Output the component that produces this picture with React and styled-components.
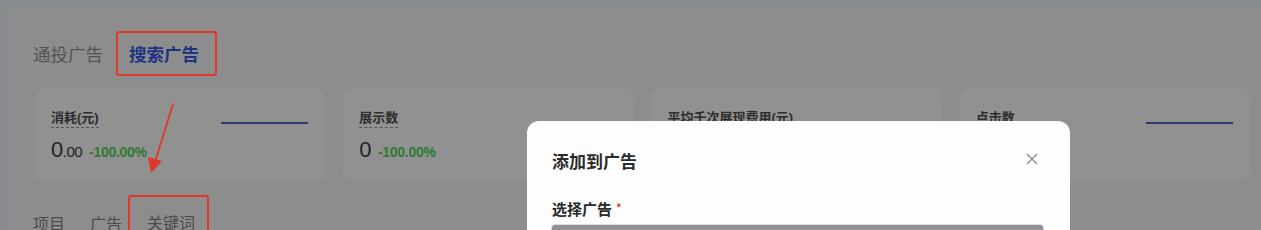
import React from "react";
import styled, { createGlobalStyle } from "styled-components";

const Global = createGlobalStyle`
  html, body { margin: 0; padding: 0; }
  body {
    background: #888b90;
    width: 1261px;
    height: 230px;
    overflow: hidden;
    font-family: "Liberation Sans", "Noto Sans CJK SC", sans-serif;
  }
`;

const Screen = styled.div`
  position: relative;
  width: 1261px;
  height: 230px;
  overflow: hidden;
  padding-top: 10px;
  box-sizing: border-box;
`;

const Panel = styled.div`
  margin-left: 8px;
  height: 220px;
  background: #8d8d8d;
  padding: 21px 11px 0 25px;
  box-sizing: border-box;
  display: flex;
  flex-direction: column;
`;

const TabRow = styled.div`
  display: flex;
  align-items: center;
  height: ${(p) => p.$h}px;
  gap: ${(p) => p.$gap}px;
`;

const Tab = styled.span`
  font-family: "Noto Sans CJK SC", sans-serif;
  font-size: ${(p) => p.$size}px;
  line-height: 1;
  color: ${(p) => (p.$active ? "#1f3384" : "#525252")};
  font-weight: ${(p) => (p.$active ? 700 : 400)};
  white-space: nowrap;
`;

const Highlight = styled.div`
  box-sizing: border-box;
  height: ${(p) => p.$h}px;
  border: 2.5px solid #e2362b;
  border-radius: 3px;
  display: flex;
  align-items: center;
  padding: 0 ${(p) => p.$pr}px 0 ${(p) => p.$pl}px;
  align-self: flex-start;
`;

const Cards = styled.div`
  display: grid;
  grid-template-columns: repeat(4, 1fr);
  gap: 18px;
  margin: 12px 0 0 2px;
`;

const Card = styled.div`
  height: 92px;
  background: #919191;
  border-radius: 9px;
  display: flex;
  justify-content: space-between;
  padding: 21px 17px 0 16px;
  box-sizing: border-box;
`;

const Info = styled.div`
  display: flex;
  flex-direction: column;
`;

const Label = styled.span`
  font-family: "Liberation Sans", "Noto Sans CJK SC", sans-serif;
  font-size: 13px;
  font-weight: 700;
  color: #2c2c2c;
  line-height: 18px;
  align-self: flex-start;
  border-bottom: 1px dashed #555;
  white-space: nowrap;
`;

const ValueRow = styled.div`
  display: flex;
  align-items: baseline;
  margin-top: 10px;
  gap: 7px;
`;

const Value = styled.span`
  font-size: 22px;
  color: #222;
  line-height: 24px;
  letter-spacing: -0.5px;
`;

const Decimal = styled.span`
  font-size: 15px;
`;

const Delta = styled.span`
  font-size: 14px;
  font-weight: 700;
  color: #2d7a30;
  letter-spacing: -0.3px;
`;

const Spark = styled.svg`
  display: block;
  margin-top: 12px;
  flex-shrink: 0;
`;

const SecondTabs = styled(TabRow)`
  margin-top: 15px;
  align-items: flex-start;
`;

const SubTab = styled.span`
  font-family: "Noto Sans CJK SC", sans-serif;
  font-size: 16px;
  color: #4b4b4b;
  line-height: 1;
  margin-top: ${(p) => p.$mt}px;
  white-space: nowrap;
`;

const Arrow = styled.svg`
  position: absolute;
  left: 140px;
  top: 100px;
`;

const Modal = styled.div`
  position: absolute;
  left: 527px;
  top: 121px;
  width: 543px;
  height: 140px;
  background: #fdfdfd;
  border-radius: 12px;
  padding: 29px 32px 0 25px;
  box-sizing: border-box;
`;

const ModalHead = styled.div`
  display: flex;
  align-items: center;
  justify-content: space-between;
`;

const ModalTitle = styled.span`
  font-family: "Noto Sans CJK SC", sans-serif;
  font-size: 17px;
  font-weight: 700;
  color: #2a2a2a;
  line-height: 22px;
`;

const Close = styled.svg`
  display: block;
  margin-top: -4px;
`;

const FieldLabel = styled.div`
  margin-top: 27px;
  font-family: "Noto Sans CJK SC", sans-serif;
  font-size: 15px;
  font-weight: 700;
  color: #2a2a2a;
  line-height: 20px;
  display: flex;
  align-items: flex-start;
`;

const Required = styled.span`
  color: #d04848;
  font-size: 11px;
  margin-left: 4px;
  line-height: 16px;
`;

const Input = styled.div`
  margin-top: 5px;
  width: 493px;
  height: 34px;
  margin-left: -1px;
  border: 1.5px solid #d6dcea;
  border-radius: 4px;
  background: #8e9095;
  box-sizing: border-box;
`;

const cards = [
  { label: "消耗(元)", int: "0", dec: ".00", delta: "-100.00%", chart: true },
  { label: "展示数", int: "0", dec: "", delta: "-100.00%", chart: false },
  { label: "平均千次展现费用(元)", int: "", dec: "", delta: "", chart: false },
  { label: "点击数", int: "", dec: "", delta: "", chart: true },
];

export default function App() {
  return (
    <Screen>
      <Global />
      <Panel>
        <TabRow $h={45} $gap={13}>
          <Tab $size={17.5}>通投广告</Tab>
          <Highlight $h={45} $pl={11} $pr={16}>
            <Tab $size={17.5} $active>搜索广告</Tab>
          </Highlight>
        </TabRow>
        <Cards>
          {cards.map((c) => (
            <Card key={c.label}>
              <Info>
                <Label>{c.label}</Label>
                {c.int && (
                  <ValueRow>
                    <Value>
                      {c.int}
                      {c.dec && <Decimal>{c.dec}</Decimal>}
                    </Value>
                    <Delta>{c.delta}</Delta>
                  </ValueRow>
                )}
              </Info>
              {c.chart && (
                <Spark width="87" height="4" viewBox="0 0 87 4">
                  <line x1="0" y1="2" x2="87" y2="2" stroke="#2c3a6c" strokeWidth="2.2" />
                </Spark>
              )}
            </Card>
          ))}
        </Cards>
        <SecondTabs $h={40} $gap={0}>
          <SubTab $mt={20}>项目</SubTab>
          <SubTab $mt={20} style={{ marginLeft: 25 }}>广告</SubTab>
          <Highlight $h={45} $pl={17} $pr={12} style={{ marginLeft: 6, alignItems: "flex-start", paddingTop: 17 }}>
            <SubTab $mt={0}>关键词</SubTab>
          </Highlight>
        </SecondTabs>
      </Panel>
      <Arrow width="40" height="80" viewBox="0 0 40 80">
        <line x1="33" y1="4" x2="15" y2="62" stroke="#e2362b" strokeWidth="1.8" strokeLinecap="round" />
        <polygon points="11,73 8,57 22,61" fill="#e2362b" />
      </Arrow>
      <Modal>
        <ModalHead>
          <ModalTitle>添加到广告</ModalTitle>
          <Close width="12" height="12" viewBox="0 0 12 12">
            <path d="M1 1 L11 11 M11 1 L1 11" stroke="#8a8a8a" strokeWidth="1.3" fill="none" />
          </Close>
        </ModalHead>
        <FieldLabel>
          选择广告<Required>*</Required>
        </FieldLabel>
        <Input />
      </Modal>
    </Screen>
  );
}
